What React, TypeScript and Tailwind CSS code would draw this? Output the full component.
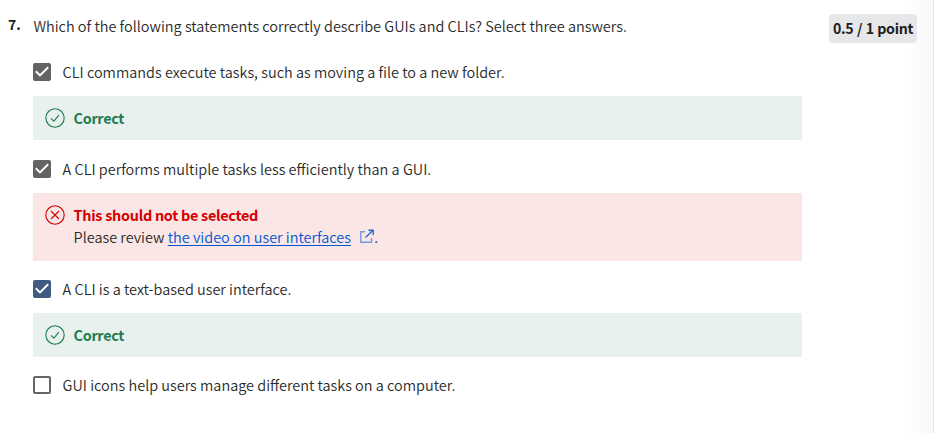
import type { ReactNode } from "react";

function CheckBox({ state }: { state: "gray" | "blue" | "empty" }) {
  if (state === "empty") {
    return <span className="h-[18px] w-[18px] shrink-0 rounded-[2px] border-2 border-[#666666] bg-white" />;
  }
  return (
    <span className={`h-[18px] w-[18px] shrink-0 rounded-[2px] ${state === "gray" ? "bg-[#636363]" : "bg-[#3f5b82]"}`}>
      <svg width="18" height="18" viewBox="0 0 18 18" fill="none" stroke="#fff" strokeWidth="2">
        <path d="M2.8 8.3 L7 12.4 L15.2 4.2" />
      </svg>
    </span>
  );
}

function Option({ state, children }: { state: "gray" | "blue" | "empty"; children: ReactNode }) {
  return (
    <div className="flex h-[18px] items-center">
      <CheckBox state={state} />
      <span className="ml-[11.6px] leading-[18px]">{children}</span>
    </div>
  );
}

function StatusIcon({ ok }: { ok: boolean }) {
  return (
    <svg className="shrink-0" width="20" height="20" viewBox="0 0 20 20" fill="none" stroke={ok ? "#1d7c50" : "#d30001"} strokeWidth="1.1">
      <circle cx="10" cy="10" r="9.2" />
      {ok ? <path d="M6 10.4 L8.8 13.1 L13.9 7.1" /> : <path d="M6 6 L14 14 M14 6 L6 14" />}
    </svg>
  );
}

function Correct() {
  return (
    <div className="flex h-11 items-center bg-[#e8f1ee] px-3">
      <StatusIcon ok />
      <span className="ml-[8.6px] text-[14.4px] font-semibold tracking-[-0.32px] text-[#1d7c50]">Correct</span>
    </div>
  );
}

export default function App() {
  return (
    <div className="flex h-[433px] w-[934px] overflow-hidden bg-white font-['Noto_Sans_CJK_SC','Noto_Sans',sans-serif] text-[14.48px] font-[350] whitespace-nowrap text-[#2a2a2a]">
      <div className="w-[33px] pt-[13px] pl-2 text-[14px] leading-[22px] font-semibold text-[#1f1f1f]">7.</div>
      <main className="w-[769px] pt-[15px]">
        <div className="pl-[0.4px] leading-[22px]">
          Which of the following statements correctly describe GUIs and CLIs? Select three answers.
        </div>
        <div className="mt-[26px] flex flex-col gap-[15px]">
          <Option state="gray">CLI commands execute tasks, such as moving a file to a new folder.</Option>
          <Correct />
        </div>
        <div className="mt-5 flex flex-col gap-[15px]">
          <Option state="gray">A CLI performs multiple tasks less efficiently than a GUI.</Option>
          <div className="flex h-[68px] bg-[#fae6e5] px-3 pt-3">
            <StatusIcon ok={false} />
            <div className="-mt-px ml-[8.6px] leading-[22px]">
              <div className="text-[14.4px] font-semibold tracking-[-0.27px] text-[#d30001]">This should not be selected</div>
              <div className="flex">
                <span>Please review&nbsp;</span>
                <a className="text-[#0056d2] underline underline-offset-2">the video on user interfaces</a>
                <svg className="mt-[3px] ml-[9.4px]" width="14" height="15" viewBox="0 0 14 15" fill="none" stroke="#6f9adf" strokeWidth="1.4">
                  <path d="M5 2.7 H0.8 V13.3 H11.5 V9" />
                  <path d="M5.5 8.5 L12.8 1.5 M8.5 1.2 H13.2 V6" stroke="#2668d4" />
                </svg>
                <span>.</span>
              </div>
            </div>
          </div>
        </div>
        <div className="mt-[19px] flex flex-col gap-[15px]">
          <Option state="blue">A CLI is a text-based user interface.</Option>
          <Correct />
        </div>
        <div className="mt-[19px]">
          <Option state="empty">GUI icons help users manage different tasks on a computer.</Option>
        </div>
      </main>
      <aside className="w-[132px] border-r border-[#e8e8e8] bg-linear-to-r from-white from-80% to-[#f8f8f8] pt-[14px] pl-[27px]">
        <div className="flex h-[29px] w-[88px] items-center justify-center rounded-[4px] bg-[#e5e7e8] pt-px text-[14.2px] font-semibold tracking-[-0.33px] [word-spacing:0.7px] text-[#1f1f1f]">0.5 / 1 point</div>
      </aside>
    </div>
  );
}
